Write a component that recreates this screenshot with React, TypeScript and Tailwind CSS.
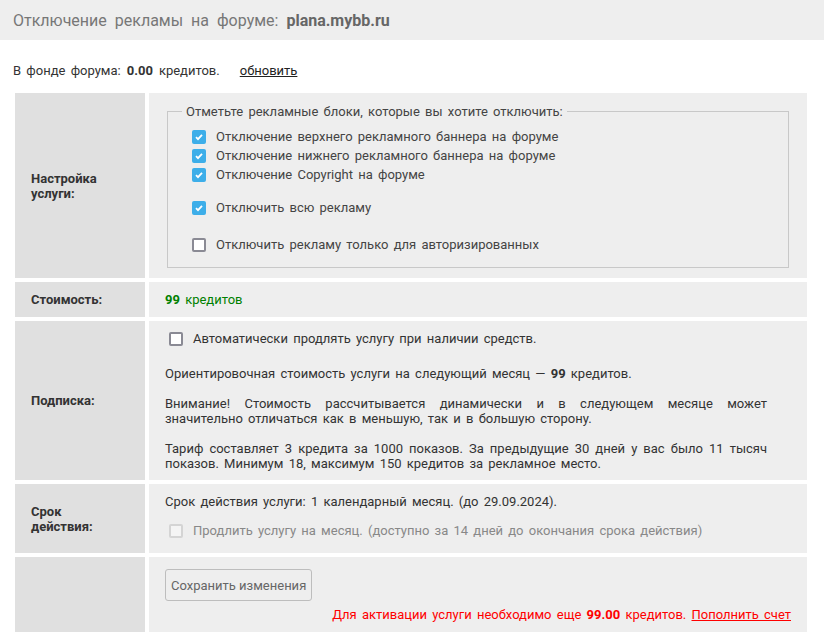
export default function App() {
  const f = { fontFamily: "Roboto, 'Liberation Sans', sans-serif", wordSpacing: "2px" } as React.CSSProperties;
  const Cb = ({ on, dim }: { on?: boolean; dim?: boolean }) =>
    on ? (
      <span className="inline-flex w-[14px] h-[14px] rounded-[2px] bg-[#3daee9] items-center justify-center shrink-0">
        <svg width="10" height="10" viewBox="0 0 10 10"><path d="M2 5.2l2 2 4-4.4" stroke="#fff" strokeWidth="1.8" fill="none" /></svg>
      </span>
    ) : (
      <span className={`inline-block w-[14px] h-[14px] rounded-[2px] border-2 shrink-0 ${dim ? "border-[#d4d4d4] bg-[#f4f4f4]" : "border-[#8a8a94] bg-white"}`} />
    );
  return (
    <div className="w-[824px] h-[638px] bg-white text-[13px] text-[#333] overflow-hidden relative leading-[15px]" style={f}>
      <div className="h-[40px] bg-[#eeeeee] flex items-center pl-[13px] text-[16px] text-[#777]" style={{ wordSpacing: "4px" }}>
        Отключение рекламы на форуме:&nbsp;<b className="text-[#666]">plana.mybb.ru</b>
      </div>
      <div className="pl-[13px] mt-[23px] h-[30px] flex items-start">
        В фонде форума: <b className="mx-[6px]">0.00</b> кредитов.
        <span className="ml-[20px] underline text-[#222]">обновить</span>
      </div>
      <div className="grid grid-cols-[130px_658px] gap-[4px] ml-[15px]">
        <div className="bg-[#e0e0e0] h-[185px] flex items-center pl-[16px] font-bold">Настройка<br />услуги:</div>
        <div className="bg-[#eeeeee] px-[18px] pt-[11px]">
          <fieldset className="border border-[#c8c8c8] h-[164px] px-[24px] pt-[10px]">
            <legend className="px-[4px] -ml-[10px] text-[#444]">Отметьте рекламные блоки, которые вы хотите отключить:</legend>
            <div className="flex flex-col gap-[4px] text-[#444]">
              <label className="flex items-center gap-[10px]"><Cb on />Отключение верхнего рекламного баннера на форуме</label>
              <label className="flex items-center gap-[10px]"><Cb on />Отключение нижнего рекламного баннера на форуме</label>
              <label className="flex items-center gap-[10px]"><Cb on />Отключение Copyright на форуме</label>
              <label className="flex items-center gap-[10px] mt-[14px]"><Cb on />Отключить всю рекламу</label>
              <label className="flex items-center gap-[10px] mt-[18px]"><Cb />Отключить рекламу только для авторизированных</label>
            </div>
          </fieldset>
        </div>
        <div className="bg-[#e0e0e0] h-[35px] flex items-center pl-[16px] font-bold">Стоимость:</div>
        <div className="bg-[#eeeeee] flex items-center pl-[16px] text-[#008000]"><b>99</b>&nbsp;кредитов</div>
        <div className="bg-[#e0e0e0] h-[159px] flex items-center pl-[16px] font-bold">Подписка:</div>
        <div className="bg-[#eeeeee] pl-[16px] pr-[40px] pt-[10px] text-justify">
          <label className="flex items-center gap-[10px] pl-[4px]"><Cb />Автоматически продлять услугу при наличии средств.</label>
          <p className="mt-[20px]">Ориентировочная стоимость услуги на следующий месяц — <b>99</b> кредитов.</p>
          <p className="mt-[15px]">Внимание! Стоимость рассчитывается динамически и в следующем месяце может значительно отличаться как в меньшую, так и в большую сторону.</p>
          <p className="mt-[15px]">Тариф составляет 3 кредита за 1000 показов. За предыдущие 30 дней у вас было 11 тысяч показов. Минимум 18, максимум 150 кредитов за рекламное место.</p>
        </div>
        <div className="bg-[#e0e0e0] h-[69px] flex items-center pl-[16px] font-bold">Срок<br />действия:</div>
        <div className="bg-[#eeeeee] pl-[16px] pt-[10px]">
          <p>Срок действия услуги: 1 календарный месяц. (до 29.09.2024).</p>
          <label className="flex items-center gap-[10px] pl-[4px] mt-[14px] text-[#888]"><Cb dim />Продлить услугу на месяц. (доступно за 14 дней до окончания срока действия)</label>
        </div>
        <div className="bg-[#e0e0e0] h-[75px]" />
        <div className="bg-[#eeeeee] pl-[16px] pr-[16px] pt-[12px]">
          <button className="h-[32px] px-[5px] border border-[#bdbdbd] rounded-[3px] bg-[#eeeeee] text-[#666]" style={{ wordSpacing: "0" }}>Сохранить изменения</button>
          <div className="text-right text-[#ff0000] mt-[6px]">
            Для активации услуги необходимо еще <b>99.00</b> кредитов. <span className="underline">Пополнить счет</span>
          </div>
        </div>
      </div>
    </div>
  );
}
